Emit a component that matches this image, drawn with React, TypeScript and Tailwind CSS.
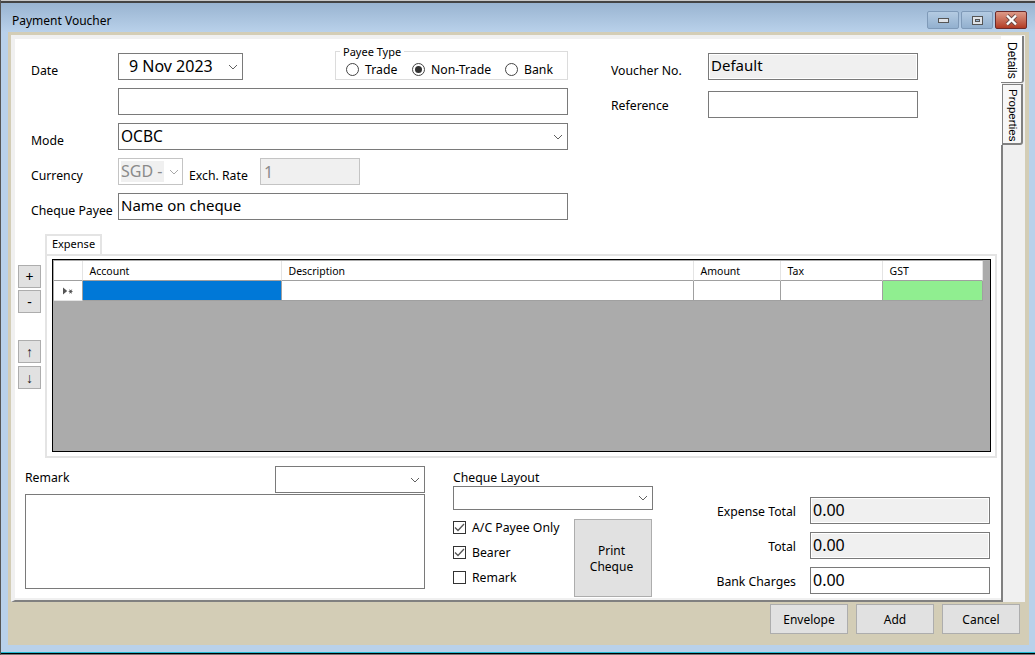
import { ReactNode } from 'react'

const font = "[font-family:'Noto_Sans',sans-serif]"

const Chevron = ({ color = '#606060' }: { color?: string }) => (
  <svg width="10" height="6" viewBox="0 0 10 6" fill="none" className="shrink-0">
    <path d="M1 1l4 4 4-4" stroke={color} strokeWidth="1" />
  </svg>
)

const Label = ({ children, className = '' }: { children: ReactNode; className?: string }) => (
  <span className={`block leading-none text-[#000] whitespace-nowrap ${className} text-[12.25px]`}>{children}</span>
)

const Box = ({
  children,
  className = '',
  textClass = 'pb-[1px]',
  chevron,
  disabled,
}: {
  children?: ReactNode
  className?: string
  textClass?: string
  chevron?: boolean
  disabled?: boolean
}) => (
  <div
    className={`flex items-center h-[27px] border border-[#7a7a7a] pl-[2px] pr-[4px] leading-none whitespace-nowrap ${
      disabled ? 'bg-[#f0f0f0] shadow-[inset_0_0_0_1px_#fff]' : 'bg-white'
    } ${className}`}
  >
    <span className={`flex-1 ${textClass}`}>{children}</span>
    {chevron && <Chevron />}
  </div>
)

const Radio = ({ label, checked, className = '' }: { label: string; checked?: boolean; className?: string }) => (
  <div className={`flex items-center gap-[6px] ${className}`}>
    <div className="flex items-center justify-center w-[13px] h-[13px] rounded-full border border-[#444] bg-white">
      {checked && <div className="w-[7px] h-[7px] rounded-full bg-[#333]" />}
    </div>
    <Label className="pt-[2px]">{label}</Label>
  </div>
)

const Check = ({ label, checked }: { label: string; checked?: boolean }) => (
  <div className="flex items-center gap-[6px] h-[13px]">
    <div className="flex items-center justify-center w-[13px] h-[13px] border border-[#333] bg-white">
      {checked && (
        <svg width="11" height="9" viewBox="0 0 11 9" fill="none">
          <path d="M1 4.5l3 3 6-6.5" stroke="#555" strokeWidth="1.3" />
        </svg>
      )}
    </div>
    <Label className="pt-[2px]">{label}</Label>
  </div>
)

const SideButton = ({ children, className = '' }: { children: ReactNode; className?: string }) => (
  <div className={`flex items-center justify-center w-[23px] h-[23px] bg-[#e1e1e1] border border-[#adadad] text-[14px] leading-none ${className}`}>
    {children}
  </div>
)

const FooterButton = ({ children }: { children: ReactNode }) => (
  <div className="flex items-center justify-center w-[78px] h-[30px] pt-[1px] bg-[#e1e1e1] border border-[#adadad] text-[12px]">
    {children}
  </div>
)

const WinButton = ({ children, className = '' }: { children: ReactNode; className?: string }) => (
  <div className={`flex items-center justify-center w-[32px] h-[18px] rounded-[2px] border ${className}`}>{children}</div>
)

const headers = ['', 'Account', 'Description', 'Amount', 'Tax', 'GST']

const App = () => {
  return (
    <div className={`flex flex-col w-[1035px] h-[655px] overflow-hidden border-l border-[#555] bg-[#b9d1ea] text-black ${font}`}>
      <div className="h-[1px] shrink-0 bg-[#c8c8c8]" />
      {/* title bar */}
      <div className="flex items-start h-[31px] shrink-0 border-t-2 border-[#444] bg-gradient-to-b from-[#99b4d1] to-[#b9d1ea] pl-[11px] pr-[8px]">
        <span className="flex-1 text-[12px] leading-none pt-[12px]">Payment Voucher</span>
        <div className="flex gap-[2px] pt-[8px]">
          <WinButton className="border-[#7f9ab8] bg-gradient-to-b from-[#b4cbe2] to-[#92b0cf]">
            <div className="w-[11px] h-[5px] bg-[#dfe3e8] border border-[#555]" />
          </WinButton>
          <WinButton className="border-[#7f9ab8] bg-gradient-to-b from-[#b4cbe2] to-[#92b0cf]">
            <div className="flex items-center justify-center w-[11px] h-[9px] bg-[#dfe3e8] border border-[#555]">
              <div className="w-[5px] h-[3px] bg-[#9db8d4] border border-[#555]" />
            </div>
          </WinButton>
          <WinButton className="border-[#6b2a2a] bg-gradient-to-b from-[#dc9a88] to-[#b23a22]">
            <svg width="15" height="12" viewBox="0 0 15 12">
              <path d="M3 1.500l9 9M12 1.500l-9 9" stroke="#6b4a45" strokeWidth="4" />
              <path d="M3 1.500l9 9M12 1.500l-9 9" stroke="#fff" strokeWidth="2.4" />
            </svg>
          </WinButton>
        </div>
      </div>

      <div className="flex flex-col h-[613px] shrink-0 ml-[7px] mr-[6px] bg-[#d3cdb6] pt-[3px] pl-[3px]">
        <div className="flex h-[567px] shrink-0">
          {/* main panel */}
          <div className="flex flex-col w-[991px] bg-white border-l-4 border-t-4 border-b-2 border-l-[#f0f0f0] border-t-[#f0f0f0] border-b-[#808080]">
            <div className="flex pl-[16px] pt-[14px]">
              <div className="flex flex-col gap-[8px] w-[537px]">
                <div className="flex h-[27px]">
                  <Label className="w-[87px] pt-[12px]">Date</Label>
                  <Box chevron className="w-[125px] pl-[10px] text-[16px]">9 Nov 2023</Box>
                  <fieldset className="relative ml-[92px] -mt-[2px] w-[233px] h-[29px] border border-[#dcdcdc]">
                    <span className="absolute left-[4px] -top-[6px] px-[3px] bg-white text-[11px] leading-none whitespace-nowrap">Payee Type</span>
                    <div className="flex pl-[10px] pt-[10px]">
                      <Radio label="Trade" className="w-[66px]" />
                      <Radio label="Non-Trade" checked className="w-[93px]" />
                      <Radio label="Bank" />
                    </div>
                  </fieldset>
                </div>
                <div className="pl-[87px]">
                  <Box className="w-[450px]" />
                </div>
                <div className="flex h-[27px]">
                  <Label className="w-[87px] pt-[12px]">Mode</Label>
                  <Box chevron className="w-[450px] text-[15.5px]" textClass="pt-[1px]">OCBC</Box>
                </div>
                <div className="flex h-[27px]">
                  <Label className="w-[87px] pt-[12px]">Currency</Label>
                  <div className="flex items-center w-[65px] h-[27px] border border-[#c4c4c4] pl-[2px] pr-[3px] text-[16px] leading-none text-[#8a8a8a] bg-white">
                    <span className="flex-1 h-[21px] pt-[2px] bg-[#f0f0f0] mr-[5px] whitespace-nowrap">SGD -</span>
                    <Chevron color="#a8a8a8" />
                  </div>
                  <Label className="ml-[6px] w-[71px] pt-[12px]">Exch. Rate</Label>
                  <div className="flex items-center w-[100px] h-[27px] border border-[#c4c4c4] bg-[#f0f0f0] pl-[3px] text-[16px] leading-none text-[#8a8a8a]">
                    1
                  </div>
                </div>
                <div className="flex h-[27px]">
                  <Label className="w-[87px] pt-[12px]">Cheque Payee</Label>
                  <Box className="w-[450px] text-[15px]" textClass="pb-[3px]">Name on cheque</Box>
                </div>
              </div>
              <div className="flex flex-col gap-[11px] ml-[43px]">
                <div className="flex h-[27px]">
                  <Label className="w-[97px] pt-[12px]">Voucher No.</Label>
                  <Box disabled className="w-[210px] text-[15px]" textClass="pb-[3px]">Default</Box>
                </div>
                <div className="flex h-[27px]">
                  <Label className="w-[97px] pt-[9px]">Reference</Label>
                  <Box className="w-[210px]" />
                </div>
              </div>
            </div>

            {/* expense grid */}
            <div className="flex mt-[14px] pl-[3px]">
              <div className="flex flex-col w-[23px] pt-[31px]">
                <SideButton className="pt-[1px]">+</SideButton>
                <SideButton className="mt-[2px]">-</SideButton>
                <SideButton className="mt-[27px] text-[#222]">↑</SideButton>
                <SideButton className="mt-[3px] text-[#222]">↓</SideButton>
              </div>
              <div className="flex flex-col ml-[4px] w-[952px]">
                <div className="flex items-center justify-center w-[57px] h-[20px] border-2 border-b-0 border-[#e4e4e4] text-[11px] leading-none pb-[3px]">
                  Expense
                </div>
                <div className="h-[204px] border-2 border-[#e4e4e4] pl-[5px] pt-[3px]">
                  <div className="w-[939px] h-[193px] border border-black bg-[#ababab] p-[1px]">
                    <div className="grid w-[929px] grid-cols-[29px_199px_412px_87px_102px_100px] grid-rows-[20px_20px]">
                      {headers.map((h, i) => (
                        <div
                          key={i}
                          className="bg-white border-r border-b border-r-[#e4e4e4] border-b-[#a0a0a0] pl-[6.5px] text-[10.5px] leading-[21px] last:border-r-0"
                        >
                          {h}
                        </div>
                      ))}
                      <div className="flex items-center justify-center bg-white border-r border-b border-r-[#a0a0a0] border-b-[#e4e4e4] text-[#555]">
                        <svg width="11" height="8" viewBox="0 0 13 8" fill="#555">
                          <path d="M0 0l5 4-5 4zM8 1l1 2 2-1-1 2 2 1-2 .5 .5 2-1.500-1.500-1.500 1.500 .5-2-2-.5 2-1-1-2 2 1z" />
                        </svg>
                      </div>
                      <div className="bg-[#0078d7] border-r border-b border-[#a0a0a0]" />
                      <div className="bg-white border-r border-b border-[#a0a0a0]" />
                      <div className="bg-white border-r border-b border-[#a0a0a0]" />
                      <div className="bg-white border-r border-b border-[#a0a0a0]" />
                      <div className="bg-[#90ee90] border-r border-b border-[#a0a0a0]" />
                    </div>
                  </div>
                </div>
              </div>
            </div>

            {/* bottom section */}
            <div className="flex mt-[8px] pl-[10px]">
              <div className="flex flex-col w-[400px]">
                <div className="flex items-center justify-between h-[27px]">
                  <Label className="pb-[2px]">Remark</Label>
                  <Box chevron className="w-[150px]" />
                </div>
                <div className="mt-[1px] h-[95px] border border-[#7a7a7a] bg-white" />
              </div>
              <div className="flex flex-col w-[200px] ml-[28px]">
                <div className="h-[20px] pt-[6px]">
                  <Label>Cheque Layout</Label>
                </div>
                <Box chevron className="w-[200px] !h-[24px]" />
                <div className="flex mt-[9px]">
                  <div className="flex flex-col gap-[12px] w-[121px] pt-[2px]">
                    <Check label="A/C Payee Only" checked />
                    <Check label="Bearer" checked />
                    <Check label="Remark" />
                  </div>
                  <div className="flex items-center justify-center w-[78px] h-[78px] pr-[3px] pt-[2px] bg-[#e1e1e1] border border-[#adadad] text-[12px] leading-[16px] text-center">
                    Print
                    <br />
                    Cheque
                  </div>
                </div>
              </div>
              <div className="flex flex-col gap-[8px] w-[337px] pt-[31px]">
                {[
                  { label: 'Expense Total', disabled: true },
                  { label: 'Total', disabled: true },
                  { label: 'Bank Charges', disabled: false },
                ].map(row => (
                  <div key={row.label} className="flex items-center justify-end h-[27px]">
                    <Label className="mr-[14px] pt-[4px]">{row.label}</Label>
                    <Box disabled={row.disabled} className="w-[180px] text-[16px]">0.00</Box>
                  </div>
                ))}
              </div>
            </div>
            <div className="mt-auto h-[2px] bg-[#f0f0f0]" />
          </div>

          {/* side tabs */}
          <div className="relative w-[23px] bg-[#f0f0f0]">
            <div className="absolute -left-[1px] top-[1px] flex items-center w-[23px] h-[47px] bg-white border-r-2 border-b border-[#808080] rounded-br-[3px] pt-[6px] [font-family:'Liberation_Sans',sans-serif] text-[12px] leading-none [writing-mode:vertical-rl]">
              Details
            </div>
            <div className="absolute left-0 top-[49px] flex items-center w-[21px] h-[61px] bg-[#f7f7f7] border-2 border-l border-t border-[#808080] rounded-br-[3px] pt-[4px] [font-family:'Liberation_Sans',sans-serif] text-[11.5px] leading-none [writing-mode:vertical-rl]">
              Properties
            </div>
            <div className="absolute -left-[1px] top-[110px] bottom-0 w-[2px] bg-[#808080]" />
          </div>
        </div>

        {/* footer buttons */}
        <div className="flex justify-end gap-[8px] pt-[2px] pr-[9px]">
          <FooterButton>Envelope</FooterButton>
          <FooterButton>Add</FooterButton>
          <FooterButton>Cancel</FooterButton>
        </div>
      </div>

      <div className="h-[7px] shrink-0" />
      <div className="h-[1px] shrink-0 bg-[#20b8d0]" />
      <div className="h-[1px] shrink-0 bg-black" />
      <div className="flex-1 bg-[#777]" />
    </div>
  )
}

export default App
